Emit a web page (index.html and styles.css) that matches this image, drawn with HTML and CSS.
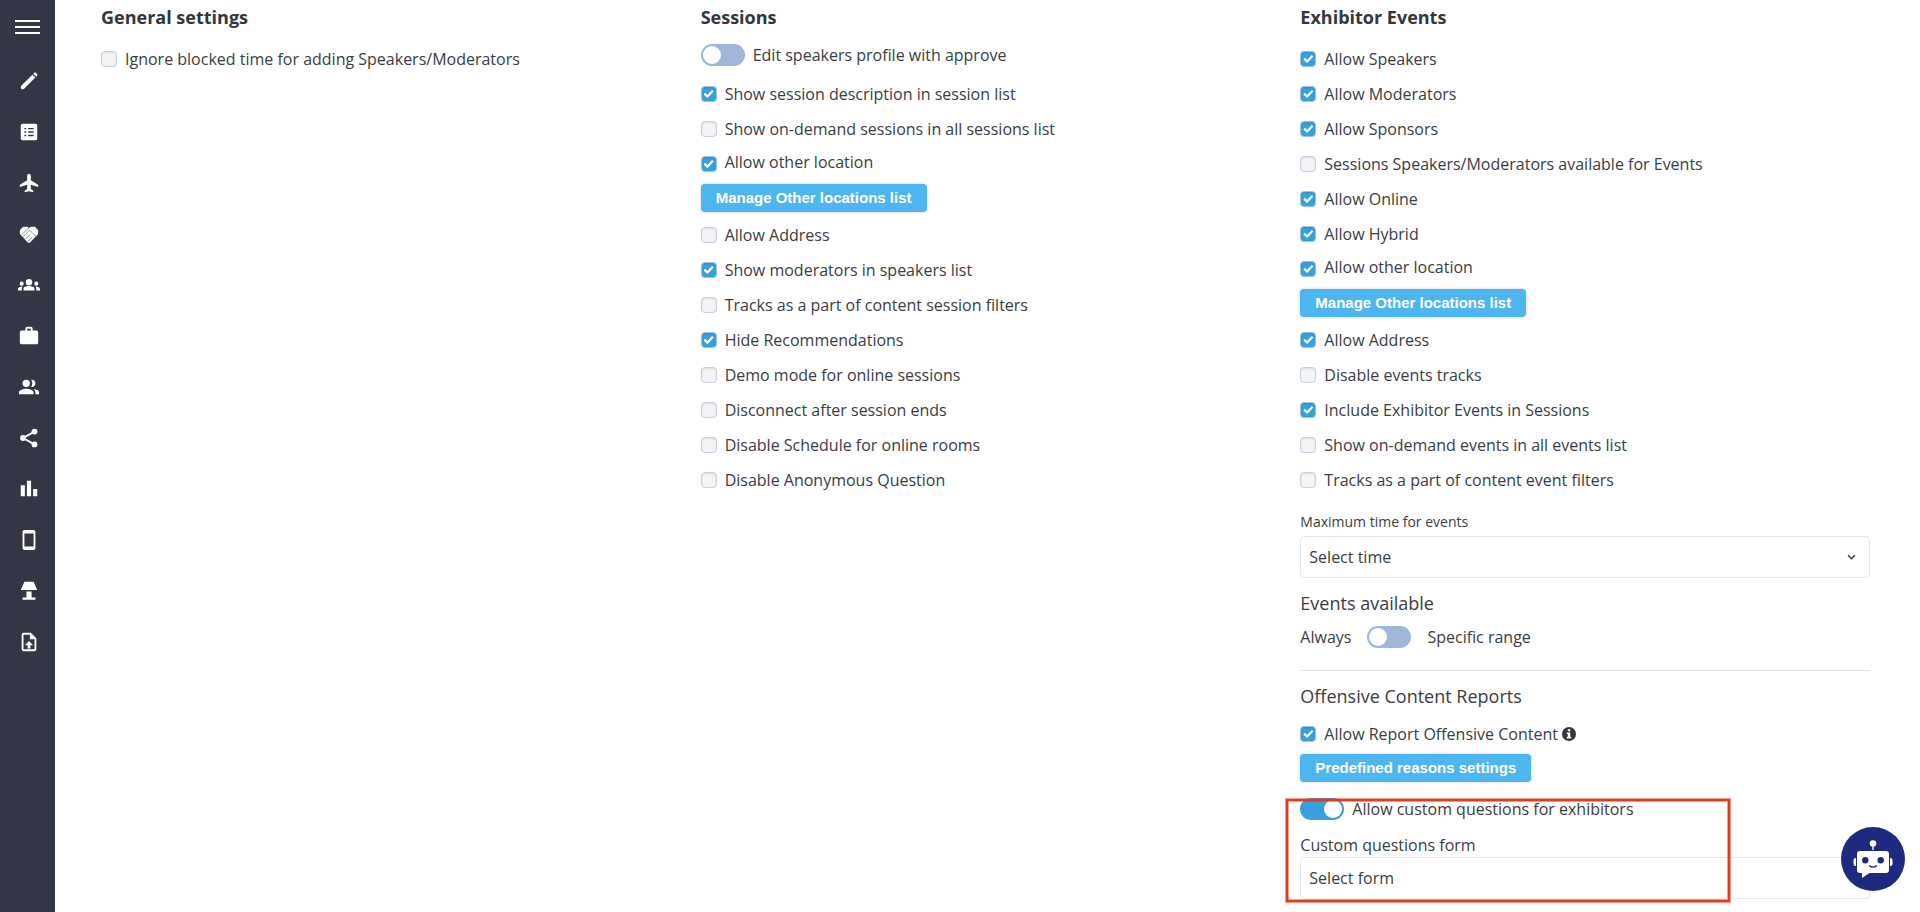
FILE: index.html
```html
<!DOCTYPE html>
<html lang="en">
<head>
<meta charset="utf-8">
<title>Event settings</title>
<meta name="viewport" content="width=device-width, initial-scale=1">
<link rel="stylesheet" href="styles.css">
</head>
<body>
<div class="app">
  <aside class="sidebar">
    <button class="menu-button" type="button" aria-label="Menu"><span></span><span></span><span></span></button>
    <nav class="nav">
      <a href="#edit" aria-label="Edit"><svg viewBox="0 0 24 24"><path d="M20.700 6.500 19.800 7.400 16.600 4.200l.9-.9c.6-.6 1.600-.6 2.200 0l1 1c.6.6.6 1.600 0 2.200zM15.700 5.100l3.200 3.200L7 20.200c-1.200 1-2.600 1-3.400.2s-.8-2.200.2-3.400z"/></svg></a>
      <a href="#agenda" aria-label="Agenda"><svg viewBox="0 0 24 24"><path fill-rule="evenodd" d="M19 3H5a2 2 0 0 0-2 2v14c0 1.100.9 2 2 2h14a2 2 0 0 0 2-2V5a2 2 0 0 0-2-2zM7 7.500h2V9H7zm0 3.700h2v1.600H7zM7 15h2v1.500H7zm10 1.500h-6V15h6zm0-3.700h-6v-1.600h6zM17 9h-6V7.500h6z"/></svg></a>
      <a href="#travel" aria-label="Travel"><svg viewBox="0 0 24 24"><path d="M22 16.300v-2.300l-8-5V4a2 2 0 0 0-4 0v5l-8 5v2.300l8-2.500V18.500l-2.700 2V22.200l4.700-1.300 4.700 1.300V20.500l-2.700-2v-4.700z"/></svg></a>
      <a href="#partners" aria-label="Partners"><svg viewBox="0 0 24 24"><path d="M2 8 5.500 4h4.500l2 1.500L14 4h4.500L22 8v4l-9 9.500h-2L2 12z"/><path class="nav__line" d="m5.500 15 7-7 3 2.500 4.500 4.500M8 17.500l5-5M10.500 20l5-5M4 12.500 12 5.500"/></svg></a>
      <a href="#groups" aria-label="Groups"><svg viewBox="0 0 24 24"><circle cx="12" cy="9" r="3.500"/><circle cx="4" cy="10.500" r="2.200"/><circle cx="20" cy="10.500" r="2.200"/><path d="M6 18v-2c0-2 3-3 6-3s6 1 6 3v2zM0 18v-1.500c0-1.600 2-2.600 5-2.800-.7.8-.9 1.500-.9 2.300v2zM24 18v-1.500c0-1.600-2-2.600-5-2.800.7.8.9 1.500.9 2.300v2z"/></svg></a>
      <a href="#exhibitors" aria-label="Exhibitors"><svg viewBox="0 0 24 24"><path fill-rule="evenodd" d="M10 2h4a2 2 0 0 1 2 2v2h4a2 2 0 0 1 2 2v11a2 2 0 0 1-2 2H4a2 2 0 0 1-2-2V8c0-1.100.9-2 2-2h4V4c0-1.100.9-2 2-2zm4 4V4h-4v2z"/></svg></a>
      <a href="#attendees" aria-label="Attendees"><svg viewBox="0 0 24 24"><circle cx="9" cy="8" r="4"/><path d="M1 20v-2c0-2.700 5.300-4 8-4s8 1.300 8 4v2zM14.400 11.900c1.500-2.200 1.500-5.500 0-7.800 2.600-.6 4.600 1.300 4.600 3.900s-2 4.500-4.600 3.900zM16.700 14.300c3 .4 6.300 1.600 6.300 3.700v2h-4v-2c0-1.500-.8-2.700-2.300-3.700z"/></svg></a>
      <a href="#share" aria-label="Share"><svg viewBox="0 0 24 24"><circle cx="18" cy="5" r="3.200"/><circle cx="5.500" cy="12" r="3.200"/><circle cx="18" cy="19" r="3.200"/><path class="nav__stroke" d="M18 5 5.500 12 18 19"/></svg></a>
      <a href="#reports" aria-label="Reports"><svg viewBox="0 0 24 24"><path d="M3 8h4.500v12H3zM9.700 3h4.600v17H9.700zM16.500 12H21v8h-4.500z"/></svg></a>
      <a href="#mobile" aria-label="Mobile app"><svg viewBox="0 0 24 24"><path fill-rule="evenodd" d="M7 1h10a2 2 0 0 1 2 2v18a2 2 0 0 1-2 2H7a2 2 0 0 1-2-2V3c0-1.100.9-2 2-2zm0 4v14h10V5z"/></svg></a>
      <a href="#booths" aria-label="Booths"><svg viewBox="0 0 24 24"><path d="M7 2h10l4 9H3zM9.200 12.500h5.600V19H19v2.500H5V19h4.200z"/></svg></a>
      <a href="#upload" aria-label="Upload"><svg viewBox="0 0 24 24"><path fill-rule="evenodd" d="M14 2H6a2 2 0 0 0-2 2v16a2 2 0 0 0 2 2h12a2 2 0 0 0 2-2V8zm4 18H6V4h7v5h5z"/><path d="m12 11 4.500 4.500h-3V19h-3v-3.500h-3z"/></svg></a>
    </nav>
  </aside>

  <main class="content">
    <section class="column">
      <h2 class="title">General settings</h2>
      <label class="option"><input class="check" type="checkbox">Ignore blocked time for adding Speakers/Moderators</label>
    </section>

    <section class="column">
      <h2 class="title">Sessions</h2>
      <label class="switch-row"><input class="switch" type="checkbox" role="switch">Edit speakers profile with approve</label>
      <label class="option"><input class="check" type="checkbox" checked>Show session description in session list</label>
      <label class="option"><input class="check" type="checkbox">Show on-demand sessions in all sessions list</label>
      <label class="option option--raised"><input class="check" type="checkbox" checked>Allow other location</label>
      <button class="button" type="button">Manage Other locations list</button>
      <label class="option"><input class="check" type="checkbox">Allow Address</label>
      <label class="option"><input class="check" type="checkbox" checked>Show moderators in speakers list</label>
      <label class="option"><input class="check" type="checkbox">Tracks as a part of content session filters</label>
      <label class="option"><input class="check" type="checkbox" checked>Hide Recommendations</label>
      <label class="option"><input class="check" type="checkbox">Demo mode for online sessions</label>
      <label class="option"><input class="check" type="checkbox">Disconnect after session ends</label>
      <label class="option"><input class="check" type="checkbox">Disable Schedule for online rooms</label>
      <label class="option"><input class="check" type="checkbox">Disable Anonymous Question</label>
    </section>

    <section class="column">
      <h2 class="title">Exhibitor Events</h2>
      <label class="option"><input class="check" type="checkbox" checked>Allow Speakers</label>
      <label class="option"><input class="check" type="checkbox" checked>Allow Moderators</label>
      <label class="option"><input class="check" type="checkbox" checked>Allow Sponsors</label>
      <label class="option"><input class="check" type="checkbox">Sessions Speakers/Moderators available for Events</label>
      <label class="option"><input class="check" type="checkbox" checked>Allow Online</label>
      <label class="option"><input class="check" type="checkbox" checked>Allow Hybrid</label>
      <label class="option option--raised"><input class="check" type="checkbox" checked>Allow other location</label>
      <button class="button" type="button">Manage Other locations list</button>
      <label class="option"><input class="check" type="checkbox" checked>Allow Address</label>
      <label class="option"><input class="check" type="checkbox">Disable events tracks</label>
      <label class="option"><input class="check" type="checkbox" checked>Include Exhibitor Events in Sessions</label>
      <label class="option"><input class="check" type="checkbox">Show on-demand events in all events list</label>
      <label class="option"><input class="check" type="checkbox">Tracks as a part of content event filters</label>

      <div class="field">
        <label class="field__label field__label--small" for="max-time">Maximum time for events</label>
        <div class="select">
          <select id="max-time"><option>Select time</option></select>
          <svg class="select__arrow" viewBox="0 0 8 5"><path d="m1 1 3 3 3-3"/></svg>
        </div>
      </div>

      <h3 class="subtitle">Events available</h3>
      <div class="range">
        <span>Always</span>
        <input class="switch" type="checkbox" role="switch" id="range">
        <label for="range">Specific range</label>
      </div>

      <hr class="divider">

      <h3 class="subtitle">Offensive Content Reports</h3>
      <div class="option">
        <input class="check" type="checkbox" id="report" checked>
        <label class="option__text" for="report">Allow Report Offensive Content
          <svg class="info" viewBox="0 0 14 14"><circle cx="7" cy="7" r="7"/><path d="M5.800 2.200h2.500v2H5.800zM4.800 5.400h3.500v4.400h1v1.700H4.800V9.800h1V7h-1z"/></svg>
        </label>
      </div>
      <button class="button" type="button">Predefined reasons settings</button>

      <div class="custom">
        <label class="switch-row"><input class="switch" type="checkbox" role="switch" checked>Allow custom questions for exhibitors</label>
        <label class="field__label field__label--spaced" for="custom-form">Custom questions form</label>
        <div class="select">
          <select id="custom-form"><option>Select form</option></select>
          <svg class="select__arrow" viewBox="0 0 8 5"><path d="m1 1 3 3 3-3"/></svg>
        </div>
        <div class="highlight"></div>
      </div>
    </section>
  </main>
</div>

<button class="chatbot" type="button" aria-label="Chat assistant">
  <svg viewBox="0 0 64 64">
    <circle class="bot-fill" cx="32" cy="16.500" r="3.300"/>
    <path class="bot-fill" d="M31.300 18h1.400v5h-1.400zM19 24h26a3 3 0 0 1 3 3v16a3 3 0 0 1-3 3H28.500L21 51v-5h-2a3 3 0 0 1-3-3V27a3 3 0 0 1 3-3zM15 31v8c-1.500 0-2.500-.8-2.500-2.300v-3.400c0-1.500 1-2.300 2.500-2.300zM49 31v8c1.500 0 2.500-.8 2.500-2.300v-3.400c0-1.500-1-2.300-2.500-2.300z"/>
    <circle cx="24.300" cy="33.300" r="3.200"/><circle cx="39.700" cy="33.300" r="3.200"/>
    <path class="bot-smile" d="M28.300 38.500c2 2.200 5.400 2.200 7.400 0"/>
  </svg>
</button>
</body>
</html>
```
FILE: styles.css
```css
* {
  box-sizing: border-box;
}

body {
  margin: 0;
  background: #fff;
  color: #3a3d42;
  font: 16px/20px "Open Sans", "Noto Sans", sans-serif;
}

button,
select,
input {
  margin: 0;
  font: inherit;
}

.app {
  display: flex;
  min-height: 100vh;
}

/* Sidebar */
.sidebar {
  flex: none;
  width: 55px;
  background: #333645;
}

.menu-button {
  display: flex;
  flex-direction: column;
  justify-content: center;
  gap: 4px;
  width: 100%;
  height: 54px;
  padding: 0 15px;
  border: 0;
  background: none;
}

.menu-button span {
  height: 2px;
  background: #fff;
}

.nav {
  padding-top: 1px;
}

.nav a {
  display: flex;
  align-items: center;
  height: 51px;
  padding-left: 18px;
}

.nav svg {
  width: 22px;
  height: 22px;
  fill: #fff;
}

.nav .nav__line {
  fill: none;
  stroke: #8b8d99;
  stroke-width: 1;
}

.nav .nav__stroke {
  fill: none;
  stroke: #fff;
  stroke-width: 2;
}

/* Settings columns */
.content {
  flex: 1;
  display: grid;
  grid-template-columns: repeat(3, minmax(0, 1fr));
  gap: 30px;
  padding: 5px 50px 12px 46px;
}

.title {
  margin: 0 0 12px;
  color: #33363b;
  font-size: 18px;
  line-height: 24px;
  font-weight: 700;
}

.subtitle {
  margin: 0;
  font-size: 18px;
  line-height: 24px;
  font-weight: 400;
}

.option {
  display: flex;
  align-items: center;
  gap: 8px;
  padding: 8px 0 7px;
}

.option--raised {
  align-items: flex-end;
  padding: 6px 0 9px;
}

.option__text {
  display: flex;
  align-items: center;
  gap: 4px;
}

.check {
  flex: none;
  display: grid;
  place-items: center;
  width: 16px;
  height: 16px;
  border: 1px solid #c3d0e6;
  border-radius: 4px;
  background: #f4f4f4;
  box-shadow: inset 0 1px 2px rgba(0, 0, 0, .1);
  appearance: none;
}

.check:checked {
  border-color: #9cc3e2;
  background: #38a0dc;
}

.check:checked::after {
  content: "";
  width: 10px;
  height: 8px;
  background: #fff;
  clip-path: polygon(0 55%, 15% 35%, 37% 62%, 84% 0, 100% 18%, 38% 100%);
}

.switch-row {
  display: flex;
  align-items: center;
  gap: 8px;
  padding: 3px 0 10px;
}

.switch {
  flex: none;
  width: 44px;
  height: 22px;
  padding: 2px;
  border-radius: 11px;
  background: #9fb6d8;
  appearance: none;
}

.switch::before {
  content: "";
  display: block;
  width: 18px;
  height: 18px;
  border-radius: 50%;
  background: #fff;
}

.switch:checked {
  background: #38a0dc;
}

.switch:checked::before {
  margin-left: auto;
}

.button {
  display: block;
  height: 28px;
  margin: 3px 0 5px;
  padding: 0 15px;
  border: 0;
  border-radius: 4px;
  background: #4db5f0;
  box-shadow: 0 0 3px rgba(0, 0, 0, .2);
  color: #fff;
  font: 700 15px/28px "Liberation Sans", Arial, sans-serif;
}

.field {
  margin: 13px 0;
}

.field__label {
  display: block;
  line-height: 24px;
}

.field__label--small {
  margin-bottom: 2px;
  font-size: 14px;
}

.field__label--spaced {
  margin-top: 3px;
}

.select {
  position: relative;
}

.select select {
  display: block;
  width: 100%;
  height: 42px;
  padding: 0 8px;
  border: 1px solid #e6e7e8;
  border-radius: 4px;
  background: #fff;
  color: inherit;
  appearance: none;
}

.select__arrow {
  position: absolute;
  top: 18px;
  right: 14px;
  width: 9px;
  height: 6px;
  fill: none;
  stroke: #33363b;
  stroke-width: 1.3;
  pointer-events: none;
}

.range {
  display: flex;
  align-items: center;
  gap: 16px;
  padding: 11px 0 22px;
}

.divider {
  height: 1px;
  margin: 0 0 13px;
  border: 0;
  background: #e3e4e5;
}

.divider + .subtitle {
  margin-bottom: 8px;
}

.info {
  width: 14px;
  height: 14px;
  fill: #33363b;
}

.info path {
  fill: #fff;
}

.custom {
  position: relative;
  margin-top: 13px;
}

.highlight {
  position: absolute;
  top: 4px;
  bottom: -3px;
  left: -14px;
  right: 140px;
  border: 2px solid #e8391f;
  box-shadow: 0 0 0 1px rgba(232, 57, 31, .5), inset 0 0 0 1px rgba(232, 57, 31, .5);
  pointer-events: none;
}

/* Chat assistant */
.chatbot {
  position: fixed;
  right: 15px;
  bottom: 21px;
  width: 64px;
  height: 64px;
  padding: 0;
  border: 0;
  border-radius: 50%;
  background: #1d2a7d;
}

.chatbot svg {
  display: block;
  width: 64px;
  height: 64px;
  fill: #1d2a7d;
}

.chatbot .bot-fill {
  fill: #fff;
}

.chatbot .bot-smile {
  fill: none;
  stroke: #1d2a7d;
  stroke-width: 1.2;
}
```
